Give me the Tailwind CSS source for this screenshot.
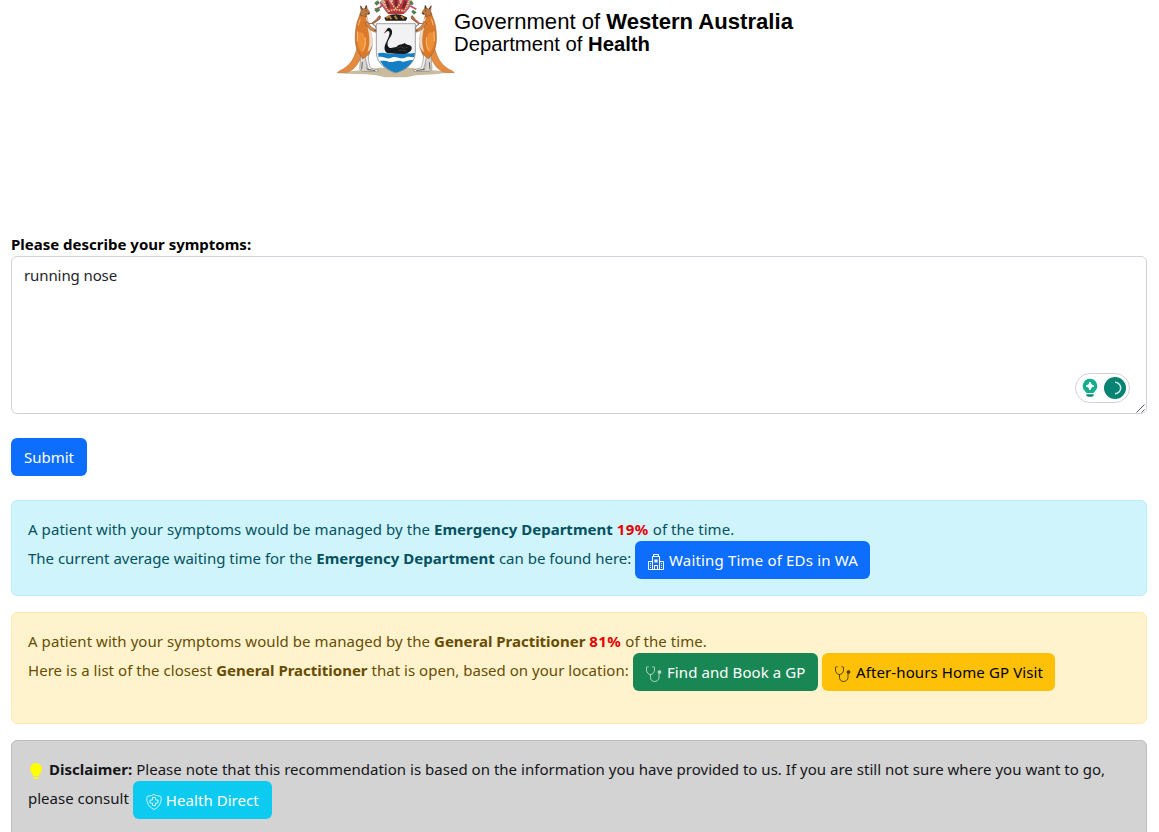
<!DOCTYPE html>
<html lang="en">
<head>
<meta charset="utf-8">
<title>Department of Health</title>
<script src="https://cdn.jsdelivr.net/npm/@tailwindcss/browser@4"></script>
</head>
<body class="bg-white h-[832px] overflow-hidden font-['Noto_Sans',sans-serif] text-[15px] leading-6 text-[#212529]">
<svg class="hidden">
  <defs>
    <symbol id="steth" viewBox="0 0 16 16"><path d="M2.700.8H1.300c-.5 0-.8.3-.8.8v2.300C.5 6.600 2.300 8.500 4.500 8.500s4-1.900 4-4.600V1.600c0-.5-.3-.8-.8-.8H6.300M4.500 8.500v3c0 2.300 1.600 4 4 4s4.500-1.700 4.500-4V7.500" fill="none" stroke="currentColor" stroke-width=".65"/><circle cx="13.500" cy="6" r="1.500" fill="currentColor" fill-opacity=".6" stroke="currentColor" stroke-width=".5"/></symbol>
    <g id="roo">
      <path d="M82 142C72 176 62 198 28 213L22 218L50 217C74 211 84 190 96 168Z" fill="#e58b40" stroke="#a8682f" stroke-width="1.500"/>
      <path d="M92 156L91 180L89 208L97 214H137L141 210L110 204L109 180L120 158Z" fill="#d8d5d2" stroke="#77706a" stroke-width="1.500"/>
      <path d="M114 158L116 184L121 203L146 211L140 215L116 212L109 188L104 160Z" fill="#f0efed" stroke="#77706a" stroke-width="1.500"/>
      <path d="M91 38C88 52 80 64 78 82C75 104 74 128 80 145C85 158 92 166 98 176C108 172 122 158 126 140C128 116 124 98 117 84L113 62L109 44Z" fill="#dc7a2b" stroke="#8c5529" stroke-width="1.500"/>
      <path d="M107 48C111 66 112 82 116 98C119 116 120 134 112 156C124 150 130 134 127 114C125 98 121 86 117 78L113 58Z" fill="#e8d9c8"/>
      <path d="M84 96C78 116 82 142 96 158C112 144 110 114 98 98Z" fill="#ee8e35"/>
      <path d="M91 56L85 76M83 94L82 124M98 152C106 140 108 126 105 112" fill="none" stroke="#f9bd7d" stroke-width="3"/>
      <path d="M91 17L96 25L99 27L105 25L109 15L112 26L118 35L119 41L114 44L106 42L109 50L91 46L93 31Z" fill="#c2793f" stroke="#6f4a2c" stroke-width="1.500"/>
      <path d="M93 19L97 28M109 18L107 27M113 41L119 39M107 32L110 33" fill="none" stroke="#40332b" stroke-width="3"/>
      <path d="M113 70L130 71L150 57C154 46 148 44 143 53C138 61 131 64 126 69" fill="#b86b48" stroke="#774630" stroke-width="2"/>
      <path d="M105 69C112 82 119 91 137 97L145 93L140 88C130 88 120 80 113 64Z" fill="#d1864c" stroke="#7e5634" stroke-width="1.500"/>
      <path d="M132 91L145 93M128 73L136 77L139 86M97 186L95 208M110 207L136 212" fill="none" stroke="#514941" stroke-width="2.500"/>
    </g>
  </defs>
</svg>

<header class="flex h-[232px] items-start pl-[330px]">
  <svg class="h-[84px] w-[130px] shrink-0" viewBox="0 0 390 252">
    <path d="M22 220C80 208 108 212 148 203H242C280 211 320 209 371 217C330 222 300 224 258 226L228 232H165L139 226C100 221 60 223 22 220Z" fill="#c9bb9d"/>
    <use href="#roo"/>
    <use href="#roo" transform="matrix(-1 0 0 1 395 0)"/>
    <path d="M139 71H256V158C255 190 226 211 197 219C168 210 140 190 139 158Z" fill="#f2f2f4"/>
    <path d="M144 160C162 154 178 165 197 160C218 153 233 165 255 158C253 190 226 211 197 218C169 210 147 192 144 160Z" fill="#1580c5"/>
    <path d="M145 172C158 166 166 179 182 174C197 165 209 179 224 174C236 167 244 173 252 171V181C238 178 232 186 218 185C203 177 192 188 177 186C162 179 154 185 147 181Z" fill="#fff"/>
    <path d="M139 71H256V158C255 190 226 211 197 219C168 210 140 190 139 158Z" fill="none" stroke="#777" stroke-width="2"/>
    <path d="M163 99L174 83C186 84 190 95 183 108C173 123 168 133 178 143C184 145 191 142 200 140C208 130 216 136 223 129C231 137 241 132 245 142C247 151 238 160 222 162L176 160C163 157 160 143 168 128C175 113 180 104 178 95C174 91 170 95 163 99Z" fill="#16191c"/>
    <path d="M201 145L212 140L223 145L233 141M205 152L218 150L229 153" stroke="#444b50" stroke-width="2" fill="none"/>
    <path d="M163 99L171 93" stroke="#c8402f" stroke-width="3"/>
    <path d="M155 0C145 8 151 18 160 22C167 32 170 40 183 44H213C225 37 228 28 236 20C245 14 245 5 240 0Z" fill="#cba497"/>
    <path d="M163 0C162 17 170 31 178 41H219C229 28 236 15 235 0H218L213 12L206 0H190L184 13L176 0Z" fill="#bd3842"/>
    <path d="M169 4L177 24M198 0V28M227 3L219 25" stroke="#742732" stroke-width="8"/>
    <path d="M174 33Q198 22 222 33V42H174Z" fill="#b43a3d"/>
    <path d="M163 4Q168 24 175 34Q198 24 222 34Q232 20 235 3M184 2Q187 17 198 26Q210 15 213 2" fill="none" stroke="#e8c985" stroke-width="5" stroke-dasharray="5 3"/>
    <path d="M163 53Q198 33 232 53L228 62H167Z" fill="#241e1b"/>
    <path d="M169 55L178 48L184 58M194 47L201 58M213 48L222 56" stroke="#bd803b" stroke-width="6" fill="none"/>
    <path d="M134 28L151 22L158 12M150 6L163 23L174 39M242 8L236 23L222 39M241 18L259 28" stroke="#b8586b" stroke-width="5" fill="none"/>
    <path d="M133 30L146 23L151 31L140 38ZM133 8L144 1L149 10L139 17ZM243 0L251 10L246 17L239 7ZM249 29L260 37L252 44L244 35Z" fill="#4f814b"/>
  </svg>
  <div class="-ml-[6px] pt-[10px] font-['Liberation_Sans',sans-serif] text-black whitespace-nowrap">
    <div class="h-[23px] text-[22.100px] leading-[23px]">Government of <b>Western Australia</b></div>
    <div class="h-[23px] text-[20.270px] leading-[23px]">Department of <b>Health</b></div>
  </div>
</header>

<main class="pr-3 pl-[11px]">
  <label class="block h-6 font-bold text-black">Please describe your symptoms:</label>
  <div class="relative h-[158px] rounded-md border border-[#ced4da] bg-white px-3 py-[6px] tracking-[-0.1px]">running nose
    <div class="absolute right-4 bottom-[10px] flex h-[30px] w-[55px] items-center gap-[6px] rounded-full border border-[#cfd2dc] bg-white pl-[6px]">
      <svg class="h-5 w-4" viewBox="0 0 16 20"><path d="M8 .8a7.300 7.300 0 0 1 4.500 13L11.500 15h-7l-1-1.200A7.300 7.300 0 0 1 8 .8Z" fill="#14ae8b"/><path d="M8 4Q8.500 7.500 12 8Q8.500 8.500 8 12Q7.500 8.500 4 8Q7.500 7.500 8 4Z" fill="#fff" stroke="#fff"/><path d="M4.300 16.300h7.400v.8q0 1.700-2 1.700H6.300q-2 0-2-1.700Z" fill="#078872"/></svg>
      <svg class="h-[22px] w-[22px]" viewBox="0 0 22 22"><circle cx="11" cy="11" r="11" fill="#078373"/><path d="M11 5.300a5.700 5.700 0 0 1 0 11.400" fill="none" stroke="#c9eee7" stroke-width="1.500"/></svg>
    </div>
    <svg class="absolute right-0 bottom-0 h-[10px] w-[10px]" viewBox="0 0 10 10"><path d="M.5 9.500l8-8M5.500 9.500l3-3" stroke="#555" fill="none"/></svg>
  </div>
  <button class="mt-6 flex h-[38px] w-[76px] items-center justify-center rounded-md bg-[#0d6efd] text-white">Submit</button>

  <section class="mt-6 h-24 rounded-md border border-[#b6effb] bg-[#cff4fc] p-4 whitespace-nowrap text-[#055160]">
    <p class="flex h-6 gap-1"><span class="tracking-[0.063px]">A patient with your symptoms would be managed by the</span><b class="tracking-[0.020px]">Emergency Department</b><b class="tracking-[0.430px] text-[#e60000]">19%</b><span class="tracking-[0.040px]">of the time.</span></p>
    <div class="flex h-[38px] gap-1"><p class="flex w-[603px] gap-1 pt-[5px]"><span class="tracking-[-0.015px]">The current average waiting time for the</span><b class="tracking-[0.010px]">Emergency Department</b><span>can be found here:</span></p>
      <a class="flex h-[38px] w-[235px] items-center gap-[5px] rounded-md bg-[#0d6efd] pl-[13px] text-white"><svg class="mt-1 h-4 w-4" viewBox="0 0 16 16" fill="currentColor"><path d="M8.500 5.034v1.100l.953-.55.5.867L9 7l.953.55-.5.866-.953-.55v1.100h-1v-1.100l-.953.55-.5-.866L7 7l-.953-.55.5-.866.953.55v-1.100zM13 9h1v1h-1zM13 11h1v1h-1zM13 13h1v1h-1zM2 9h1v1H2zM2 11h1v1H2zM2 13h1v1H2z"/><path d="M5 1a1 1 0 0 1 1-1h4a1 1 0 0 1 1 1v1a1 1 0 0 1 1 1v4h3a1 1 0 0 1 1 1v7a1 1 0 0 1-1 1H1a1 1 0 0 1-1-1V8a1 1 0 0 1 1-1h3V3a1 1 0 0 1 1-1zm2 14h2v-3H7zm3 0h1V3H5v12h1v-3a1 1 0 0 1 1-1h2a1 1 0 0 1 1 1zm0-14H6v1h4zm2 7v7h3V8zm-8 7V8H1v7z"/></svg><span class="tracking-[0.172px]">Waiting Time of EDs in WA</span></a>
    </div>
  </section>

  <section class="mt-4 h-28 rounded-md border border-[#ffecb5] bg-[#fff3cd] p-4 whitespace-nowrap text-[#664d03]">
    <p class="flex h-6 gap-1"><span class="tracking-[0.063px]">A patient with your symptoms would be managed by the</span><b class="tracking-[-0.010px]">General Practitioner</b><b class="tracking-[0.430px] text-[#e60000]">81%</b><span class="tracking-[0.040px]">of the time.</span></p>
    <div class="flex h-[38px] gap-1"><p class="flex w-[601px] gap-1 pt-[5px]"><span class="tracking-[0.045px]">Here is a list of the closest</span><b class="tracking-[-0.010px]">General Practitioner</b><span class="tracking-[0.025px]">that is open, based on your location:</span></p>
      <a class="flex h-[38px] w-[185px] items-center gap-[5px] rounded-md bg-[#198754] pl-[13px] text-white"><svg class="mt-1 h-4 w-4"><use href="#steth"/></svg><span class="tracking-[0.084px]">Find and Book a GP</span></a>
      <a class="flex h-[38px] w-[233px] items-center gap-[5px] rounded-md bg-[#ffc107] pl-[13px] text-black"><svg class="mt-1 h-4 w-4"><use href="#steth"/></svg><span class="tracking-[0.106px]">After-hours Home GP Visit</span></a>
    </div>
  </section>

  <section class="mt-4 h-28 rounded-md border border-[#bcbebf] bg-[#d3d3d3] p-4 whitespace-nowrap text-[#141619]">
    <p class="flex h-6 gap-1"><svg class="mt-[6px] mr-px h-4 w-4" viewBox="0 0 16 16" fill="#ff0"><path d="M2 6a6 6 0 1 1 10.174 4.310c-.203.196-.359.4-.453.619l-.762 1.769A.5.5 0 0 1 10.500 13h-5a.5.5 0 0 1-.46-.302l-.761-1.770a1.964 1.964 0 0 0-.453-.618A5.984 5.984 0 0 1 2 6m3 8.500a.5.5 0 0 1 .5-.5h5a.5.5 0 0 1 0 1l-.224.447a1 1 0 0 1-.894.553H6.618a1 1 0 0 1-.894-.553L5.500 15a.5.5 0 0 1-.5-.5"/></svg><b>Disclaimer:</b><span class="tracking-[0.020px]">Please note that this recommendation is based on the information you have provided to us. If you are still not sure where you want to go,</span></p>
    <div class="flex h-[38px] gap-1"><p class="pt-[5px]">please consult</p>
      <a class="flex h-[38px] w-[139px] items-center gap-1 rounded-md bg-[#0dcaf0] pl-[13px] text-white"><svg class="mt-1 h-4 w-4" viewBox="0 0 16 16" fill="none" stroke="currentColor" stroke-width=".8"><path d="M8 .5Q5.500 1.900 1.500 2.300L.9 3C.5 8 2 12.500 8 15.500C14 12.500 15.500 8 15.100 3L14.500 2.300Q10.500 1.900 8 .5Z"/><path d="M6.500 3.500h3v2.500H12v3H9.500v2.500h-3V9H4V6h2.500Z"/></svg><span class="tracking-[0.058px]">Health Direct</span></a>
    </div>
  </section>
</main>
</body>
</html>
